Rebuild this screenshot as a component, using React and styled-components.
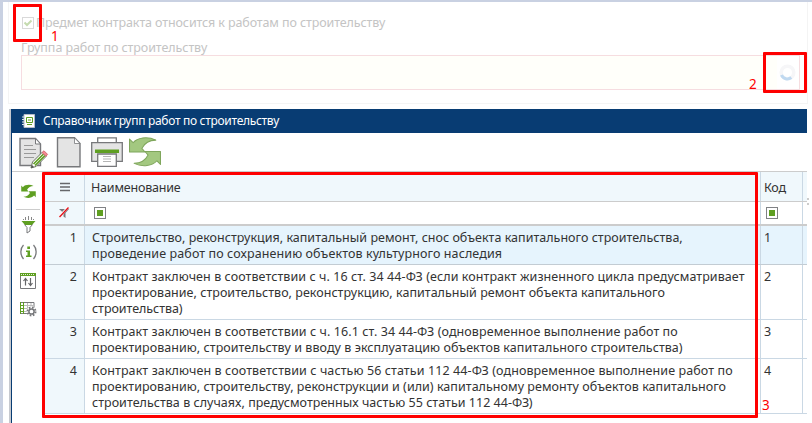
import React from "react";
import styled, { createGlobalStyle } from "styled-components";

const GlobalStyle = createGlobalStyle`
  * { box-sizing: border-box; }
  body {
    margin: 0;
    overflow: hidden;
    font-family: "Noto Sans", "Open Sans", sans-serif;
    font-size: 12.5px;
    line-height: 16px;
    color: #333;
    background: #fff;
  }
`;

const Page = styled.div`
  position: relative;
  width: 812px;
  height: 423px;
  overflow: hidden;
  background: #fff;
  border-top: 2px solid #c9d1e2;
  border-left: 3px solid #c9d1e2;
`;

const FormPanel = styled.section`
  width: 800px;
  height: 102px;
  margin-left: 5px;
  padding: 13px 7px 0 12px;
  border: 1px solid #f4f4f4;
  border-top: 0;
  color: #c4c4c4;
`;

const CheckRow = styled.div`
  display: flex;
  align-items: center;
  gap: 2px;
  height: 16px;
`;

const CheckBox = styled.span`
  width: 12px;
  height: 12px;
  margin-left: 1px;
  border: 1px solid #d9d9d9;
  display: flex;
`;

const Text = styled.span`
  display: block;
  white-space: nowrap;
  letter-spacing: ${(p) => p.$track || 0}px;
`;

const FieldLabel = styled.div`
  margin-top: 9px;
  height: 15px;
`;

const Field = styled.div`
  width: 779px;
  height: 35px;
  display: flex;
  justify-content: flex-end;
  align-items: center;
  padding-right: 3px;
  border: 1px solid #f6dde0;
  background: linear-gradient(to right, #fffffa 755px, #fff 755px);
`;

const Window = styled.section`
  display: flex;
  flex-direction: column;
  width: 798px;
  height: 314px;
  margin: 5px 0 0 6px;
  border-left: 2px solid #c6c9cf;
`;

const WindowInner = styled.div`
  flex: 1;
  display: flex;
  flex-direction: column;
  border-left: 1px solid #083c73;
`;

const TitleBar = styled.header`
  display: flex;
  align-items: center;
  gap: 7px;
  height: 24px;
  padding-left: 10px;
  background: #083c73;
  color: #fff;
  font-size: 12px;
`;

const Toolbar = styled.div`
  display: flex;
  height: 39px;
  padding: 4px 0 0 7px;
  border-bottom: 1px solid #ccc;
`;

const SpacedIcon = styled.span`
  display: flex;
  margin-left: ${(p) => p.$left}px;
`;

const Body = styled.div`
  flex: 1;
  display: flex;
`;

const SideBar = styled.nav`
  display: flex;
  flex-direction: column;
  align-items: center;
  width: 32px;
  padding-top: 12px;
`;

const Divider = styled.span`
  width: 24px;
  height: 1px;
  margin: 10px 0 6px;
  background: #ccc;
`;

const SideIcon = styled.span`
  display: flex;
  height: 20px;
  margin-bottom: ${(p) => p.$gap || 0}px;
`;

const Grid = styled.div`
  flex: 1;
  display: flex;
  flex-direction: column;
`;

const Row = styled.div`
  display: grid;
  grid-template-columns: 41px 676px 42px 1fr;
  height: ${(p) => p.$h}px;
  background: ${(p) => p.$bg || "#fff"};
  border-bottom: ${(p) => p.$line || "1px solid #cad8e4"};
`;

const Cell = styled.div`
  padding: ${(p) => p.$pad || "4px 0 0 7px"};
  border-right: 1px solid #cad8e4;
`;

const NumberCell = styled(Cell)`
  padding: 4px 7px 0 0;
  text-align: right;
  background: #f0f8fc;
`;

const IconCell = styled(Cell)`
  display: flex;
  align-items: center;
  justify-content: center;
  background: #f0f8fc;
  padding: 0 0 0 1px;
`;

const FilterBox = styled.span`
  display: block;
  width: 12px;
  height: 12px;
  border: 1px solid #808285;
  background: #5f9f22;
  box-shadow: inset 0 0 0 2px #fff;
`;

const Highlight = styled.div`
  position: absolute;
  left: ${(p) => p.$x - 3}px;
  top: ${(p) => p.$y - 2}px;
  width: ${(p) => p.$w}px;
  height: ${(p) => p.$h}px;
  border: 3px solid #fe0000;
  border-radius: 1px;
`;

const Mark = styled.span`
  position: absolute;
  left: ${(p) => p.$x - 3}px;
  top: ${(p) => p.$y - 2}px;
  color: #fe0000;
  font-size: 13.5px;
  line-height: 16px;
`;

const Grip = styled.span`
  position: absolute;
  left: 804px;
  top: 196px;
  width: 2px;
  height: 7px;
  border-left: 2px dotted #ccc;
`;

const Refresh = ({ w, h, light }) => (
  <svg width={w} height={h} viewBox="0 0 31 29">
    <g fill={light ? "#a3c880" : "#5f9f22"} stroke={light ? "#7fa65c" : "none"} strokeWidth="1" strokeLinejoin="round">
      <path d="M.5 2L4 5.500C8 .5 18-1 26 3 20 3 15 6 12.500 11L15.500 14.500H.5z" />
      <path d="M30.500 26.500L27 23C23 28 13 29.500 5 25.500c6 0 11-3 13.500-8L15.500 14H30.500z" />
    </g>
  </svg>
);

const EditIcon = () => (
  <svg width="30" height="32" viewBox="0 0 30 32">
    <path d="M1 1.500h15.500L21.500 7v21.500H1z" fill="#e4e4e4" stroke="#77787b" strokeWidth="1.400" />
    <path d="M16.500 1.500V7h5z" fill="#fff" stroke="#77787b" />
    <path d="M5 8.500h9M5 12.500h12M5 16.500h12M5 20.500h10" stroke="#999" />
    <path d="M12 31l1.500-6L23.500 15l4 4L17 29.500z" fill="#fff" stroke="#66705c" />
    <path d="M14.500 27l10-10M16 28.500l10-10" stroke="#5f9f22" strokeWidth="1.600" />
    <path d="M23 15.500l2-1.700 3.500 3.500-1.500 2z" fill="#f58a93" stroke="#d46c75" />
    <path d="M12 31l1-3 2 2z" fill="#555" />
  </svg>
);

const PageIcon = () => (
  <svg width="26" height="32" viewBox="0 0 26 32">
    <path d="M1.500 .8h17L24 6.500v23.300H1.500z" fill="#e4e4e4" stroke="#77787b" strokeWidth="1.400" />
    <path d="M18.500 .8v5.700H24z" fill="#fff" stroke="#77787b" strokeWidth=".8" />
  </svg>
);

const PrintIcon = () => (
  <svg width="32" height="30" viewBox="0 0 32 30">
    <path d="M6.700 6V.8h18.600V6" fill="#fff" stroke="#77787b" strokeWidth="1.300" />
    <path d="M.7 5.700h30.600v18.600H.7z" fill="#e4e4e4" stroke="#77787b" strokeWidth="1.300" />
    <path d="M6.700 17h18.600v12.300H6.700z" fill="#fff" stroke="#77787b" strokeWidth="1.300" />
    <path d="M4 12.500h24V16H4z" fill="#5f9f22" />
    <path d="M12 19.500h8M12 22h8M12 24.500h8" stroke="#b5b5b5" />
  </svg>
);

const BookIcon = () => (
  <svg width="14" height="14" viewBox="0 0 14 14">
    <path d="M2 .5h10.500v13H2z" fill="#fff" stroke="#b4bcc7" />
    <path d="M0 3h2M0 5.500h2M0 8h2M0 10.500h2" stroke="#dce3e9" />
    <path d="M4.500 3.500h6V8.500h-6z" fill="none" stroke="#5f9f22" />
    <path d="M6 6h3M5 10.500h5" stroke="#5f9f22" />
  </svg>
);

const Funnel = () => (
  <svg width="15" height="18" viewBox="0 0 15 18">
    <path d="M4.500 1v3M7.500 0v4M10.500 1v3M2.500 3v1M12.500 3v1" stroke="#888" />
    <path d="M.5 5h14L11 9H4z" fill="#5f9f22" />
    <path d="M3.500 8.500L6 11.500V17l3-2v-3.500l2.500-3" fill="none" stroke="#77787b" />
  </svg>
);

const Info = () => (
  <svg width="17" height="16" viewBox="0 0 17 16">
    <path d="M3.500 1C0 4.500 0 11 3.500 15M13.500 1C17 4.500 17 11 13.500 15" fill="none" stroke="#77787b" strokeWidth="1.300" />
    <path d="M7.300 2.500h2.700V5H7.300zM6 6.500h4v5h1.500V13H6v-1.500h1.500V8H6z" fill="#5f9f22" />
  </svg>
);

const SortIcon = () => (
  <svg width="16" height="17" viewBox="0 0 16 17">
    <path d="M.5 1.500h15v15H.5z" fill="#fff" stroke="#77787b" />
    <path d="M0 1h16v3H0z" fill="#5f9f22" />
    <path d="M1 2.500h14" stroke="#e4f0d9" strokeDasharray="1 1" />
    <path d="M5.500 13.500V7M3.500 9l2-2.500 2 2.500M10.500 6v7.500M8.500 11l2 2.500 2-2.500" fill="none" stroke="#66676a" strokeWidth="1.200" />
  </svg>
);

const TableGear = () => (
  <svg width="17" height="16" viewBox="0 0 17 16">
    <path d="M.5 1.500h13.500v11H.5z" fill="#fff" stroke="#77787b" />
    <path d="M4 4.500h10M4 7.500h7M4 10.500h4M7.500 2v10M11 2v5" stroke="#bbb" />
    <path d="M.5 1v12M3.500 1v12M0 4.500h3M0 7.500h3M0 10.500h3" stroke="#5f9f22" />
    <circle cx="11.500" cy="10.500" r="4" fill="#fff" stroke="#fff" strokeWidth="2" />
    <circle cx="11.500" cy="10.500" r="4" fill="none" stroke="#77787b" strokeWidth="2" strokeDasharray="1.600 1.540" />
    <circle cx="11.500" cy="10.500" r="2.600" fill="#fff" stroke="#77787b" strokeWidth="1.500" />
  </svg>
);

const MenuIcon = () => (
  <svg width="10" height="10" viewBox="0 0 10 10">
    <path d="M0 1.500h10M0 5h10M0 8.500h10" stroke="#66676a" strokeWidth="1.500" />
  </svg>
);

const NoFilter = () => (
  <svg width="11" height="12" viewBox="0 0 11 12">
    <path d="M0 2h10L6.500 6v5l-2-1.500V6z" fill="#77787b" />
    <path d="M.5 9.500L9.500 0" stroke="#fff" strokeWidth="2.500" />
    <path d="M.5 10L9.500 .5" stroke="#e3131b" strokeWidth="1.400" />
  </svg>
);

const Spinner = () => (
  <svg width="17" height="17" viewBox="0 0 17 17">
    <circle cx="8.500" cy="8.500" r="6.300" fill="none" stroke="#f6f6f8" strokeWidth="3.500" />
    <path d="M2.500 11a6.300 6.300 0 0 0 9.800 2.500" fill="none" stroke="#c0d9f0" strokeWidth="3" />
  </svg>
);

const rows = [
  { h: 39, bg: "#e6f4fd", line: "1px solid #c3ccd3", lines: [
    ["Строительство, реконструкция, капитальный ремонт, снос объекта капитального строительства,", 0.02],
    ["проведение работ по сохранению объектов культурного наследия", 0.1],
  ] },
  { h: 55, lines: [
    ["Контракт заключен в соответствии с ч. 16 ст. 34 44-ФЗ (если контракт жизненного цикла предусматривает", 0.075],
    ["проектирование, строительство, реконструкцию, капитальный ремонт объекта капитального", 0.035],
    ["строительства)", -0.05],
  ] },
  { h: 39, lines: [
    ["Контракт заключен в соответствии с ч. 16.1 ст. 34 44-ФЗ (одновременное выполнение работ по", 0.09],
    ["проектированию, строительству и вводу в эксплуатацию объектов капитального строительства)", 0.05],
  ] },
  { h: 55, lines: [
    ["Контракт заключен в соответствии с частью 56 статьи 112 44-ФЗ (одновременное выполнение работ по", 0.1],
    ["проектированию, строительству, реконструкции и (или) капитальному ремонту объектов капитального", 0.04],
    ["строительства в случаях, предусмотренных частью 55 статьи 112 44-ФЗ)", 0.03],
  ] },
];

export default function App() {
  return (
    <>
      <GlobalStyle />
      <Page>
        <FormPanel>
          <CheckRow>
            <CheckBox>
              <svg width="10" height="10" viewBox="0 0 10 10">
                <path d="M1.500 4.500L4 7l4.500-4.500" fill="none" stroke="#c5dbaf" strokeWidth="2" />
              </svg>
            </CheckBox>
            <Text $track={-0.11}>Предмет контракта относится к работам по строительству</Text>
          </CheckRow>
          <FieldLabel><Text $track={-0.07}>Группа работ по строительству</Text></FieldLabel>
          <Field><Spinner /></Field>
        </FormPanel>

        <Window>
          <WindowInner>
            <TitleBar>
              <BookIcon />
              <Text $track={-0.3}>Справочник групп работ по строительству</Text>
            </TitleBar>
            <Toolbar>
              <EditIcon />
              <SpacedIcon $left={7}><PageIcon /></SpacedIcon>
              <SpacedIcon $left={9}><PrintIcon /></SpacedIcon>
              <SpacedIcon $left={6}><Refresh w={32} h={30} light /></SpacedIcon>
            </Toolbar>
            <Body>
              <SideBar>
                <Refresh w={15} h={15} />
                <Divider />
                <SideIcon $gap={8}><Funnel /></SideIcon>
                <SideIcon $gap={8}><Info /></SideIcon>
                <SideIcon $gap={9}><SortIcon /></SideIcon>
                <SideIcon><TableGear /></SideIcon>
              </SideBar>
              <Grid>
                <Row $h={30} $bg="#f0f8fc" $line="1px solid #ccc">
                  <IconCell><MenuIcon /></IconCell>
                  <Cell $pad="8px 0 0 6px"><Text $track={-0.2}>Наименование</Text></Cell>
                  <Cell $pad="8px 0 0 3px"><Text $track={-0.2}>Код</Text></Cell>
                </Row>
                <Row $h={24} $line="2px solid #ccc">
                  <IconCell><NoFilter /></IconCell>
                  <Cell $pad="5px 0 0 9px"><FilterBox /></Cell>
                  <Cell $pad="5px 0 0 5px"><FilterBox /></Cell>
                </Row>
                {rows.map((row, i) => (
                  <Row key={i} $h={row.h} $bg={row.bg} $line={row.line}>
                    <NumberCell>{i + 1}</NumberCell>
                    <Cell>{row.lines.map(([t, k]) => <Text key={t} $track={k}>{t}</Text>)}</Cell>
                    <Cell $pad="4px 0 0 3px">{i + 1}</Cell>
                  </Row>
                ))}
              </Grid>
            </Body>
          </WindowInner>
        </Window>

        <Grip />
        <Highlight $x={13} $y={4} $w={29} $h={38} />
        <Highlight $x={763} $y={52} $w={44} $h={41} />
        <Highlight $x={42} $y={172} $w={716} $h={246} />
        <Mark $x={51} $y={28}>1</Mark>
        <Mark $x={749} $y={76}>2</Mark>
        <Mark $x={762} $y={397}>3</Mark>
      </Page>
    </>
  );
}
